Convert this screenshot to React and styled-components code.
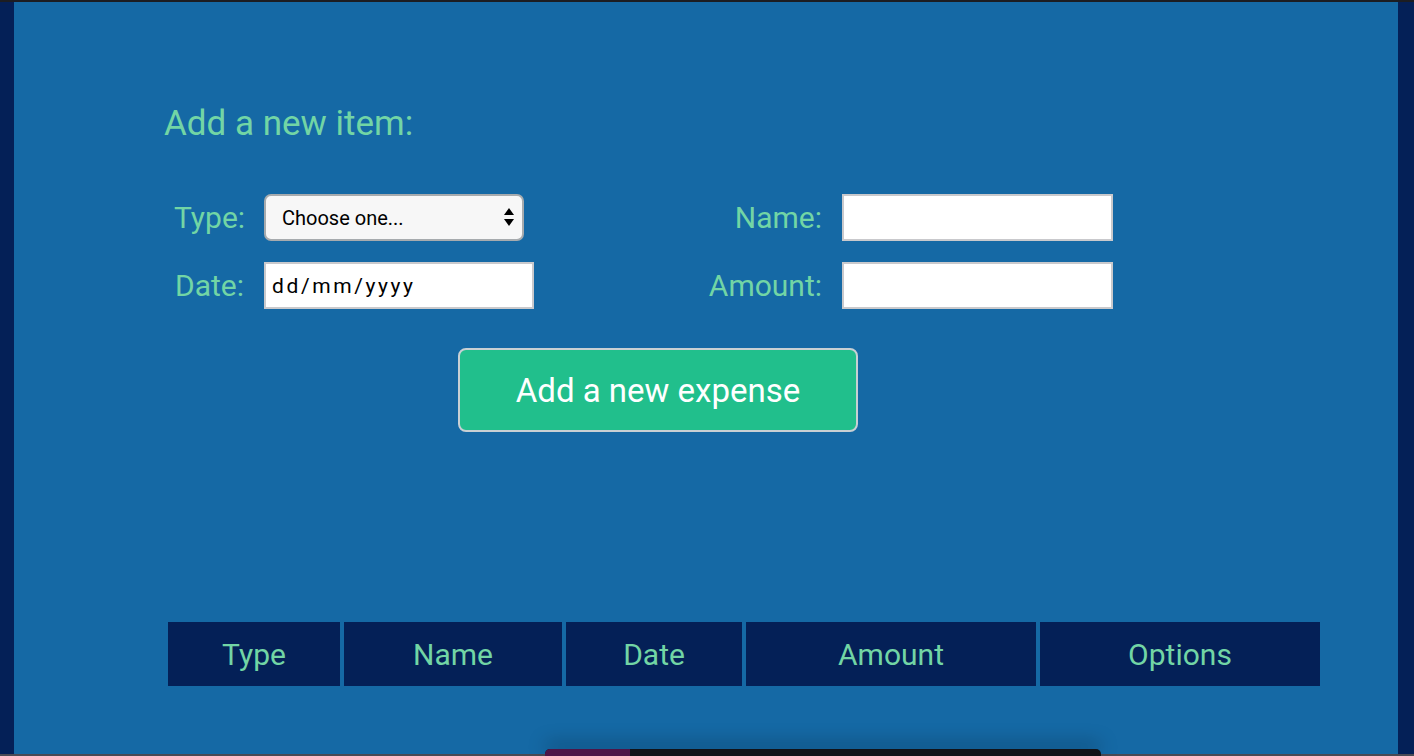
import React from "react";
import styled, { createGlobalStyle } from "styled-components";

const GlobalStyle = createGlobalStyle`
    html, body {
        margin: 0;
        padding: 0;
        height: 100%;
        overflow: hidden;
    }
    body {
        font-family: Roboto, "Noto Sans", sans-serif;
        background: #042057;
    }
`;

const Frame = styled.div`
    display: flex;
    height: 100vh;
    box-sizing: border-box;
    border-top: 2px solid #1c1d22;
    padding: 0 16px 0 14px;
    background: #042057;
`;

const Panel = styled.main`
    flex: 1;
    background: #1569a5;
    padding: 104px 0 0 150px;
    box-sizing: border-box;
    overflow: hidden;
`;

const Heading = styled.h2`
    margin: 0;
    font-size: 35px;
    line-height: 36px;
    font-weight: 400;
    color: #72d5a5;
`;

const Form = styled.form`
    display: grid;
    grid-template-columns: 70px 270px 268px 271px;
    grid-auto-rows: 47px;
    column-gap: 20px;
    row-gap: 21px;
    align-items: center;
    margin: 52px 0 0 10px;
`;

const Label = styled.label`
    font-size: 30px;
    color: #72d5a5;
    text-align: right;
    white-space: nowrap;
`;

const SelectWrap = styled.div`
    position: relative;
    width: 260px;
    height: 47px;
`;

const Select = styled.select`
    appearance: none;
    width: 100%;
    height: 100%;
    box-sizing: border-box;
    border: 2px solid #a7abae;
    border-radius: 7px;
    background: #f7f7f7;
    padding: 0 30px 0 16px;
    font-family: Roboto, sans-serif;
    font-size: 20px;
    color: #000;
`;

const Arrows = styled.svg`
    position: absolute;
    right: 10px;
    top: 14px;
    pointer-events: none;
`;

const TextInput = styled.input`
    width: ${(p) => p.$width}px;
    height: 47px;
    box-sizing: border-box;
    border: 2px solid #c9c9cc;
    background: #fff;
    padding: 0 6px;
    font-family: Roboto, sans-serif;
    font-size: 21px;
    letter-spacing: ${(p) => (p.$spaced ? "2.6px" : "normal")};
    outline: none;
    &::placeholder {
        color: #000;
    }
`;

const Submit = styled.button`
    display: block;
    width: 400px;
    height: 84px;
    margin: 39px 0 0 294px;
    box-sizing: border-box;
    border: 2px solid #c8d0d4;
    border-radius: 8px;
    background: #21bf8c;
    color: #fff;
    font-family: Roboto, sans-serif;
    font-size: 33px;
    cursor: pointer;
`;

const Table = styled.table`
    margin-top: 186px;
    border-spacing: 4px;
    margin-left: 0;
`;

const Th = styled.th`
    width: ${(p) => p.$w}px;
    height: 64px;
    padding: 0;
    background: #042057;
    color: #72d5a5;
    font-size: 30px;
    font-weight: 400;
    text-align: center;
`;

const Dock = styled.div`
    position: fixed;
    left: 0;
    right: 0;
    bottom: 0;
    height: 2px;
    background: #4a4a54;
`;

const DockPopup = styled.div`
    position: fixed;
    left: 545px;
    bottom: 0;
    width: 556px;
    height: 7px;
    display: flex;
    background: #111218;
    border-radius: 5px 5px 0 0;
    overflow: hidden;
    box-shadow: 0 -6px 18px rgba(0, 0, 0, 0.35);
`;

const DockTab = styled.div`
    width: 85px;
    background: #4e1548;
`;

const columns = [
    { label: "Type", w: 172 },
    { label: "Name", w: 218 },
    { label: "Date", w: 176 },
    { label: "Amount", w: 290 },
    { label: "Options", w: 280 },
];

export default function App() {
    return (
        <>
            <GlobalStyle />
            <Frame>
                <Panel>
                    <Heading>Add a new item:</Heading>
                    <Form onSubmit={(e) => e.preventDefault()}>
                        <Label htmlFor="type">Type:</Label>
                        <SelectWrap>
                            <Select id="type" defaultValue="">
                                <option value="">Choose one...</option>
                                <option value="food">Food</option>
                                <option value="bills">Bills</option>
                            </Select>
                            <Arrows width="10" height="18" viewBox="0 0 10 18">
                                <path d="M5 0 L10 7 H0 Z" fill="#000" />
                                <path d="M0 11 H10 L5 18 Z" fill="#000" />
                            </Arrows>
                        </SelectWrap>
                        <Label htmlFor="name">Name:</Label>
                        <TextInput id="name" type="text" $width={271} />
                        <Label htmlFor="date">Date:</Label>
                        <TextInput id="date" type="text" placeholder="dd/mm/yyyy" $width={270} $spaced />
                        <Label htmlFor="amount">Amount:</Label>
                        <TextInput id="amount" type="text" $width={271} />
                    </Form>
                    <Submit type="button">Add a new expense</Submit>
                    <Table>
                        <thead>
                            <tr>
                                {columns.map((c) => (
                                    <Th key={c.label} $w={c.w}>{c.label}</Th>
                                ))}
                            </tr>
                        </thead>
                    </Table>
                </Panel>
            </Frame>
            <Dock />
            <DockPopup>
                <DockTab />
            </DockPopup>
        </>
    );
}
